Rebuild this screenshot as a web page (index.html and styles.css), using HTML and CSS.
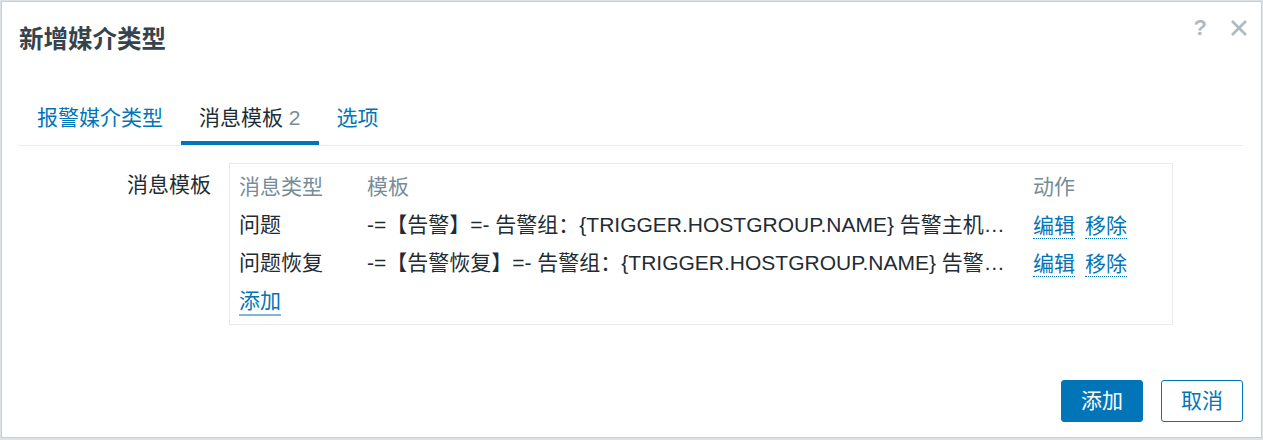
FILE: index.html
```html
<!DOCTYPE html>
<html lang="zh-CN">
<head>
<meta charset="utf-8">
<title>新增媒介类型</title>
<link rel="stylesheet" href="styles.css">
</head>
<body>
<div class="overlay">
  <div class="dialog">
    <div class="dialog-header">
      <h4 class="dialog-title">新增媒介类型</h4>
      <div class="header-tools">
        <span class="help-btn">?</span>
        <span class="close-btn">
          <svg width="18" height="18" viewBox="0 0 18 18"><path d="M2 2 L16 16 M16 2 L2 16" stroke="#acbbc2" stroke-width="2.6" fill="none"/></svg>
        </span>
      </div>
    </div>
    <div class="dialog-body">
      <ul class="tabs">
        <li class="tab"><span class="tab-link">报警媒介类型</span></li>
        <li class="tab active"><span class="tab-link">消息模板 <span class="count">2</span></span></li>
        <li class="tab"><span class="tab-link">选项</span></li>
      </ul>
      <div class="form-row">
        <div class="form-label">消息模板</div>
        <div class="table-box">
          <div class="trow thead">
            <div class="c1">消息类型</div>
            <div class="c2">模板</div>
            <div class="c3">动作</div>
          </div>
          <div class="trow">
            <div class="c1">问题</div>
            <div class="c2"><span class="trunc">-=【告警】=- 告警组：{TRIGGER.HOSTGROUP.NAME} 告警主机：{HOST.NAME} 告警地址：{HOST.IP}</span></div>
            <div class="c3"><span class="act">编辑</span><span class="act">移除</span></div>
          </div>
          <div class="trow">
            <div class="c1">问题恢复</div>
            <div class="c2"><span class="trunc">-=【告警恢复】=- 告警组：{TRIGGER.HOSTGROUP.NAME} 告警主机：{HOST.NAME} 告警地址：{HOST.IP}</span></div>
            <div class="c3"><span class="act">编辑</span><span class="act">移除</span></div>
          </div>
          <div class="trow">
            <div class="c1"><span class="add-link">添加</span></div>
          </div>
        </div>
      </div>
    </div>
    <div class="dialog-footer">
      <button class="btn btn-primary">添加</button>
      <button class="btn btn-alt">取消</button>
    </div>
  </div>
</div>
</body>
</html>
```
FILE: styles.css
```css
* { box-sizing: border-box; }
html, body { margin: 0; padding: 0; }
body {
  background: #dce2e5;
  font-family: "Liberation Sans", "Noto Sans CJK SC", sans-serif;
  font-size: 21px;
  color: #1f2c33;
}
.overlay {
  padding: 1px 1px 2px 1px;
  height: 440px;
}
.dialog {
  width: 1261px;
  height: 437px;
  background: #ffffff;
  border: 1px solid #c8d0d4;
  display: flex;
  flex-direction: column;
  padding: 0 18px 0 17px;
}
.dialog-header {
  height: 76px;
  display: flex;
  align-items: center;
  justify-content: space-between;
}
.dialog-title {
  margin: 0;
  font-size: 24.5px;
  font-weight: bold;
  line-height: 30px;
  color: #36434c;
}
.header-tools {
  display: flex;
  align-items: center;
  gap: 25px;
  margin-bottom: 25px;
  margin-right: -5px;
}
.help-btn {
  font-family: "Liberation Sans", sans-serif;
  font-size: 22px;
  font-weight: bold;
  color: #acbbc2;
  line-height: 22px;
  margin-right: -2px;
}
.close-btn { display: flex; }
.dialog-body {
  padding-top: 18px;
}
.tabs {
  list-style: none;
  margin: 0;
  padding: 0;
  display: flex;
  border-bottom: 1px solid #e8ecee;
}
.tab {
  padding: 10px 18px 11px;
  border-bottom: 4px solid transparent;
  line-height: 24px;
}
.tab-link { color: #0275b8; }
.tab.active { border-bottom-color: #0275b8; }
.tab.active .tab-link { color: #1f2c33; }
.count { color: #768d99; }
.form-row {
  display: flex;
  gap: 18px;
  margin-top: 17px;
}
.form-label {
  width: 192px;
  text-align: right;
  padding-top: 10px;
  line-height: 24px;
  color: #1f2c33;
}
.table-box {
  width: 944px;
  border: 1px solid #e8ecee;
  padding: 4px 9px;
}
.trow {
  display: flex;
  height: 38px;
  align-items: center;
  line-height: 24px;
}
.thead { color: #768d99; }
.c1 { width: 128px; flex: none; }
.c2 { width: 666px; flex: none; padding-right: 26px; overflow: hidden; }
.c3 { flex: 1; display: flex; gap: 10px; align-items: center; }
.trunc {
  display: block;
  white-space: nowrap;
  overflow: hidden;
  text-overflow: ellipsis;
}
.act {
  display: inline-block;
  color: #0275b8;
  border-bottom: 1px dotted #0275b8;
  line-height: 24px;
  margin-top: 3px;
}
.add-link {
  color: #0275b8;
  border-bottom: 2px solid #84b6d8;
  padding-bottom: 1px;
  margin-top: 2px;
  display: inline-block;
}
.dialog-footer {
  margin-top: auto;
  display: flex;
  justify-content: flex-end;
  gap: 18px;
  padding-bottom: 15px;
}
.btn {
  height: 42px;
  padding: 0 19px;
  font-family: "Liberation Sans", "Noto Sans CJK SC", sans-serif;
  font-size: 21px;
  border-radius: 3px;
  border: 1px solid #0275b8;
  cursor: pointer;
  line-height: 24px;
}
.btn-primary { background: #0275b8; color: #ffffff; }
.btn-alt { background: #ffffff; color: #0275b8; }
```
